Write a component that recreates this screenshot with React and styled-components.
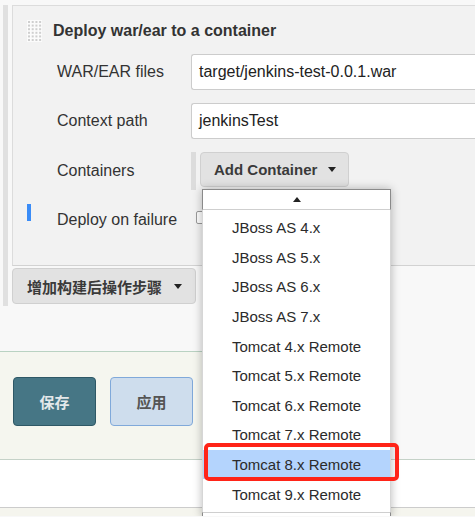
import React from "react";
import styled, { createGlobalStyle } from "styled-components";

const Global = createGlobalStyle`
  html, body { margin: 0; padding: 0; overflow: hidden; background: #f8f8f8; }
  body { font-family: "Liberation Sans", Arial, "Noto Sans CJK SC", sans-serif; color: #333; }
  * { box-sizing: border-box; }
`;

const Root = styled.div`
  width: 475px;
  padding-top: 5px;
`;

const Section = styled.div`
  margin-left: 3px;
  border-left: 5px solid #e0e0e0;
  padding-left: 4px;
  padding-bottom: 2px;
`;

const Panel = styled.div`
  background: #f2f2f2;
  border-top: 1px solid #dcdcdc;
  border-left: 1px solid #dcdcdc;
  border-bottom: 1px solid #d2d2d2;
  padding: 14px 0 28px 14px;
`;

const Header = styled.div`
  display: flex;
  align-items: center;
  gap: 11px;
  height: 22px;
`;

const Title = styled.div`
  font-weight: bold;
  font-size: 16px;
  color: #333;
`;

const Form = styled.div`
  display: grid;
  grid-template-columns: 30px 134px 1fr;
  row-gap: 13px;
  margin-top: 12px;
`;

const Marker = styled.div`
  width: 4px;
  height: 17px;
  background: ${(p) => (p.$show ? "#3a8cf7" : "transparent")};
  align-self: start;
  margin-top: 1px;
`;

const Label = styled.div`
  font-size: 16px;
  color: #333;
  display: flex;
  align-items: center;
  min-height: ${(p) => p.$h || 36}px;
`;

const TextInput = styled.div`
  height: 36px;
  width: 100%;
  background: #fff;
  border: 1px solid #cccccc;
  border-right: none;
  border-radius: 3px 0 0 3px;
  padding-left: 7px;
  display: flex;
  align-items: center;
  font-size: 16px;
  color: #222;
  white-space: nowrap;
`;

const ContainersCell = styled.div`
  display: flex;
  gap: 4px;
  align-items: flex-start;
`;

const Strip = styled.div`
  width: 5px;
  height: 38px;
  background: #dcdcdc;
`;

const MenuAnchor = styled.div`
  position: relative;
`;

const GrayButton = styled.div`
  display: inline-flex;
  align-items: center;
  gap: ${(p) => p.$gap || 11}px;
  height: ${(p) => p.$h || 35}px;
  width: ${(p) => p.$w}px;
  padding: 0 0 0 ${(p) => p.$pl || 13}px;
  background: #e2e2e2;
  border: 1px solid #d0d0d0;
  border-radius: 4px;
  font-weight: bold;
  font-size: 15px;
  color: #3a3a3a;
  white-space: nowrap;
  font-family: ${(p) => (p.$cjk ? '"Noto Sans CJK SC", sans-serif' : '"Liberation Sans", Arial, sans-serif')};
`;

const Caret = styled.span`
  width: 0;
  height: 0;
  border-left: ${(p) => p.$s || 4}px solid transparent;
  border-right: ${(p) => p.$s || 4}px solid transparent;
  border-${(p) => (p.$up ? "bottom" : "top")}: 5px solid #222;
`;

const Dropdown = styled.div`
  position: absolute;
  left: 2px;
  top: 37px;
  width: 189px;
  z-index: 10;
  box-shadow: 0 0 9px rgba(0, 0, 0, 0.28);
`;

const ScrollRow = styled.div`
  height: ${(p) => p.$h}px;
  background: #fff;
  border-left: 1px solid #8a8a8a;
  border-right: 1px solid #8a8a8a;
  ${(p) => (p.$top ? "border-top: 1px solid #8a8a8a; border-bottom: 1px solid #cfcfcf;" : "border-top: 1px solid #cfcfcf;")}
  display: flex;
  justify-content: center;
  align-items: center;
`;

const List = styled.div`
  background: #fff;
  border-left: 1px solid #d6d6d6;
  border-right: 1px solid #d6d6d6;
  padding: 3px 0 3px;
`;

const Item = styled.div`
  position: relative;
  height: 29.6px;
  padding-left: 29px;
  display: flex;
  align-items: center;
  font-size: 15px;
  color: #2b2b2b;
  background: ${(p) => (p.$active ? "#b4d4fd" : "transparent")};
`;

const Annotation = styled.div`
  position: absolute;
  left: 1px;
  top: -7px;
  width: 195px;
  height: 38px;
  border: 4px solid #ff2418;
  border-radius: 5px;
`;

const Checkbox = styled.div`
  width: 13px;
  height: 13px;
  margin: 8px 0 0 5px;
  border: 1px solid #9a9a9a;
  border-radius: 2px;
  background: #fdfdfd;
`;

const PostBuild = styled.div`
  margin-top: 2px;
`;

const PageArea = styled.div`
  margin-top: 45px;
  border-bottom: 1px solid #c5d2c8;
`;

const BottomBar = styled.div`
  width: 320px;
  height: 108px;
  background: #f5f6ef;
  border-top: 1px solid #b9d2c2;
  display: flex;
  gap: 14px;
  padding: 25px 0 0 13px;
`;

const ActionButton = styled.div`
  width: 83px;
  height: 49px;
  border-radius: 4px;
  display: flex;
  align-items: center;
  justify-content: center;
  font-family: "Noto Sans CJK SC", sans-serif;
  font-weight: bold;
  font-size: 15px;
  background: ${(p) => (p.$primary ? "#467685" : "#cedded")};
  border: 1px solid ${(p) => (p.$primary ? "#2e5866" : "#80a9da")};
  color: ${(p) => (p.$primary ? "#e4e8ea" : "#555")};
`;

const WhiteBand = styled.div`
  height: 48px;
  background: #fff;
  border-bottom: 1px solid #cccccc;
`;

const FooterBand = styled.div`
  height: 8px;
  background: #f5f5ee;
`;

function DragHandle() {
  const dots = [];
  for (let r = 0; r < 6; r++)
    for (let c = 0; c < 4; c++)
      dots.push(<rect key={`${r}-${c}`} x={1 + c * 3.7} y={1 + r * 3.6} width="2" height="2" fill="#cfcfcf" />);
  return (
    <svg width="15" height="22" viewBox="0 0 15 22">
      <rect width="15" height="22" fill="#fbfbfb" />
      {dots}
    </svg>
  );
}

const items = [
  "JBoss AS 4.x",
  "JBoss AS 5.x",
  "JBoss AS 6.x",
  "JBoss AS 7.x",
  "Tomcat 4.x Remote",
  "Tomcat 5.x Remote",
  "Tomcat 6.x Remote",
  "Tomcat 7.x Remote",
  "Tomcat 8.x Remote",
  "Tomcat 9.x Remote",
];

export default function App() {
  return (
    <Root>
      <Global />
      <Section>
        <Panel>
          <Header>
            <DragHandle />
            <Title>Deploy war/ear to a container</Title>
          </Header>
          <Form>
            <Marker />
            <Label>WAR/EAR files</Label>
            <TextInput>target/jenkins-test-0.0.1.war</TextInput>

            <Marker />
            <Label>Context path</Label>
            <TextInput>jenkinsTest</TextInput>

            <Marker />
            <Label $h={38}>Containers</Label>
            <ContainersCell>
              <Strip />
              <MenuAnchor>
                <GrayButton $w={149}>
                  Add Container
                  <Caret />
                </GrayButton>
                <Dropdown>
                  <ScrollRow $top $h={21}>
                    <Caret $up $s={4} />
                  </ScrollRow>
                  <List>
                    {items.map((t) => (
                      <Item key={t} $active={t === "Tomcat 8.x Remote"}>
                        {t}
                        {t === "Tomcat 8.x Remote" && <Annotation />}
                      </Item>
                    ))}
                  </List>
                  <ScrollRow $h={5} />
                </Dropdown>
              </MenuAnchor>
            </ContainersCell>

            <Marker $show />
            <Label $h={34}>Deploy on failure</Label>
            <div>
              <Checkbox />
            </div>
          </Form>
        </Panel>
        <PostBuild>
          <GrayButton $cjk $w={184} $h={36} $pl={14} $gap={12}>
            增加构建后操作步骤
            <Caret $s={4.5} />
          </GrayButton>
        </PostBuild>
      </Section>
      <PageArea>
        <BottomBar>
          <ActionButton $primary>保存</ActionButton>
          <ActionButton>应用</ActionButton>
        </BottomBar>
      </PageArea>
      <WhiteBand />
      <FooterBand />
    </Root>
  );
}
